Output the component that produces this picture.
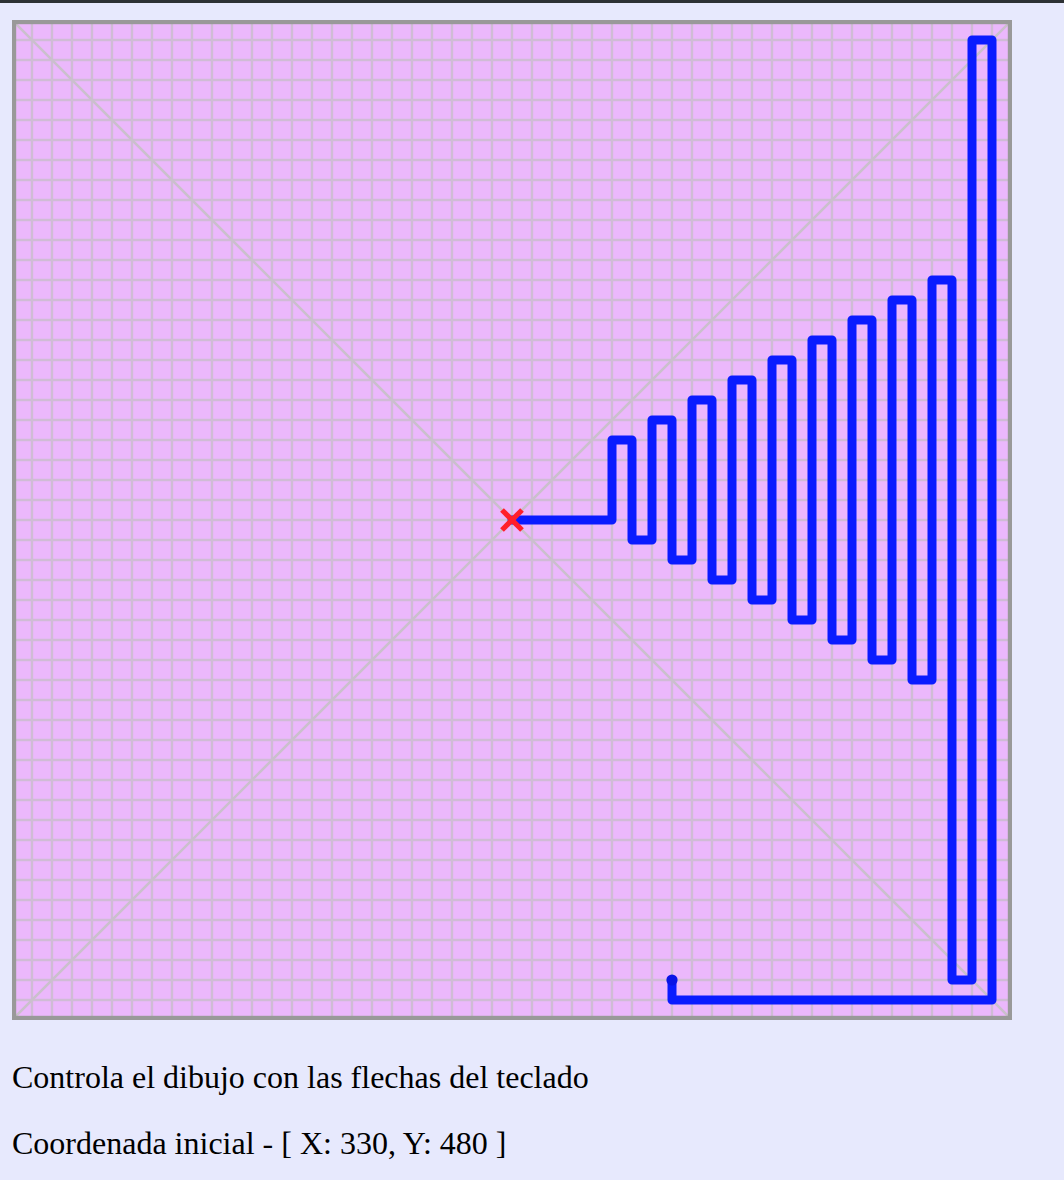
const STEP = 10;

// trazo en coordenadas del canvas (500x500)
function buildPath(): [number, number][] {
  const pts: [number, number][] = [
    [250, 250],
    [300, 250],
  ];
  let x = 300;
  let up = 210;
  let down = 260;
  for (let i = 0; i < 9; i++) {
    pts.push([x, up]);
    x += STEP;
    pts.push([x, up]);
    pts.push([x, down]);
    x += STEP;
    pts.push([x, down]);
    up -= STEP;
    down += STEP;
  }
  // el último bajón llega hasta abajo, no al escalón normal
  pts.pop();
  pts.pop();
  pts.push([470, 480], [480, 480], [480, 10], [490, 10], [490, 490], [330, 490], [330, 480]);
  return pts;
}

function DrawingCanvas() {
  const pts = buildPath();
  const d = pts.map(([px, py], i) => `${i === 0 ? "M" : "L"}${px} ${py}`).join(" ");
  const lines = [];
  for (let i = 10; i < 500; i += STEP) {
    lines.push(<line key={`v${i}`} x1={i} y1={0} x2={i} y2={500} />);
    lines.push(<line key={`h${i}`} x1={0} y1={i} x2={500} y2={i} />);
  }
  return (
    <svg width={1000} height={1000} viewBox="0 0 500 500" className="block">
      <rect x={0} y={0} width={500} height={500} fill="#ebb8fc" />
      <g stroke="#cfbcd5" strokeWidth={1.2}>{lines}</g>
      <g stroke="#cac0cc" strokeWidth={1.3}>
        <line x1={0} y1={0} x2={500} y2={500} />
        <line x1={500} y1={0} x2={0} y2={500} />
      </g>
      <rect x={1} y={1} width={498} height={498} fill="none" stroke="#999999" strokeWidth={2.2} />
      <path d={d} fill="none" stroke="#0a1bff" strokeWidth={4.5} strokeLinejoin="round" strokeLinecap="round" />
      <circle cx={330} cy={480} r={2.8} fill="#0a14e6" />
      <g stroke="#ff1f2a" strokeWidth={2.6}>
        <line x1={245} y1={245} x2={255} y2={255} />
        <line x1={255} y1={245} x2={245} y2={255} />
      </g>
    </svg>
  );
}

export default function App() {
  return (
    <div className="min-h-[1180px] bg-[#e7e9fd] font-['Liberation_Serif','Times_New_Roman',serif] text-black">
      <div className="h-[3px] bg-[#2d3135]" />
      <div className="px-[12px] pt-[17px]">
        <div className="leading-none">
          <DrawingCanvas />
        </div>
        <p className="mt-[39px] text-[32px] leading-[1.15]">Controla el dibujo con las flechas del teclado</p>
        <p className="mt-[29px] text-[32px] leading-[1.15]">Coordenada inicial - [ X: 330, Y: 480 ]</p>
      </div>
    </div>
  );
}
